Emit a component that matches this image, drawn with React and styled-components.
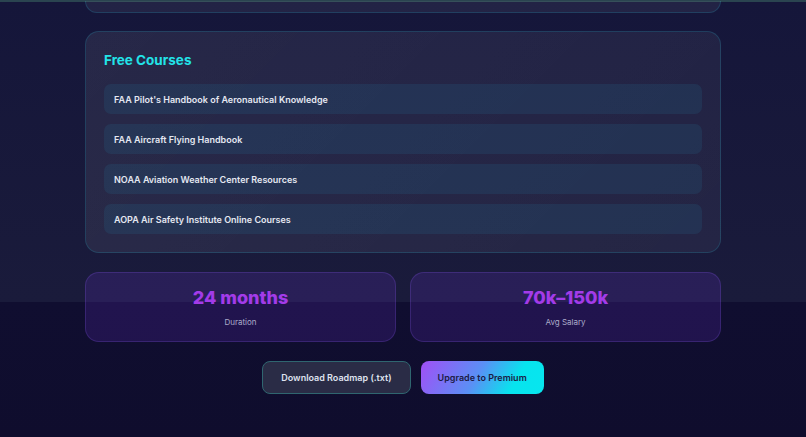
import React from "react";
import styled, { createGlobalStyle } from "styled-components";

const Global = createGlobalStyle`
  html, body { margin: 0; padding: 0; }
  body {
    font-family: Inter, "Noto Sans", sans-serif;
    min-height: 437px;
    background:
      linear-gradient(180deg, #15163a 0px, #1a1b3b 302px, #100e30 302px, #0f0d2d 437px);
    -webkit-font-smoothing: antialiased;
  }
`;

const Page = styled.div`
  display: flex;
  flex-direction: column;
  align-items: center;
  min-height: 437px;
`;

const TopLine = styled.div`
  align-self: stretch;
  height: 2px;
  background: #2a4450;
`;

const Column = styled.div`
  width: 636px;
  display: flex;
  flex-direction: column;
`;

const PrevCard = styled.div`
  height: 11px;
  margin-top: -1px;
  background: rgba(255, 255, 255, 0.06);
  border: 1px solid rgba(34, 211, 238, 0.16);
  border-top: none;
  border-radius: 0 0 14px 14px;
`;

const Card = styled.section`
  margin-top: 18px;
  padding: 18px 18px 18px;
  background: linear-gradient(135deg, rgba(255, 255, 255, 0.075), rgba(255, 255, 255, 0.05));
  border: 1px solid rgba(34, 211, 238, 0.16);
  border-radius: 14px;
`;

const Title = styled.h3`
  margin: 0 0 14px;
  font-size: 13.5px;
  line-height: 20px;
  font-weight: 700;
  color: #22e3e8;
`;

const List = styled.ul`
  list-style: none;
  margin: 0;
  padding: 0;
  display: flex;
  flex-direction: column;
  gap: 10px;
`;

const Item = styled.li`
  height: 30px;
  display: flex;
  align-items: center;
  padding: 0 10px;
  border-radius: 7px;
  background: rgba(34, 160, 200, 0.11);
  color: #e4e7f1;
  font-size: 9px;
  font-weight: 600;
`;

const Stats = styled.div`
  margin-top: 19px;
  display: grid;
  grid-template-columns: 1fr 1fr;
  gap: 14px;
`;

const Stat = styled.div`
  height: 70px;
  box-sizing: border-box;
  display: flex;
  flex-direction: column;
  align-items: center;
  justify-content: center;
  border-radius: 14px;
  background: rgba(124, 58, 237, 0.16);
  border: 1px solid rgba(139, 92, 246, 0.22);
`;

const Value = styled.div`
  font-size: 18px;
  line-height: 22px;
  font-weight: 800;
  color: #a33be9;
`;

const Label = styled.div`
  margin-top: 8px;
  font-size: 8px;
  line-height: 10px;
  color: #acacca;
`;

const Actions = styled.div`
  margin-top: 19px;
  display: flex;
  justify-content: center;
  gap: 10px;
`;

const Button = styled.button`
  height: 33px;
  padding: 0 ${(p) => (p.$primary ? "17px" : "18px")};
  border-radius: 8px;
  font-family: inherit;
  font-size: 9px;
  font-weight: 600;
  cursor: pointer;
  color: ${(p) => (p.$primary ? "#1b1a45" : "#dfe2ee")};
  background: ${(p) =>
    p.$primary
      ? "linear-gradient(120deg, #a14ff6 0%, #5b8ff5 45%, #07e4ee 75%, #07e6ef 100%)"
      : "#2a2c46"};
  border: ${(p) => (p.$primary ? "none" : "1px solid #2f6670")};
`;

const courses = [
  "FAA Pilot's Handbook of Aeronautical Knowledge",
  "FAA Aircraft Flying Handbook",
  "NOAA Aviation Weather Center Resources",
  "AOPA Air Safety Institute Online Courses",
];

export default function App() {
  return (
    <>
      <Global />
      <Page>
        <TopLine />
        <Column>
          <PrevCard />
          <Card>
            <Title>Free Courses</Title>
            <List>
              {courses.map((c) => (
                <Item key={c}>{c}</Item>
              ))}
            </List>
          </Card>
          <Stats>
            <Stat>
              <Value>24 months</Value>
              <Label>Duration</Label>
            </Stat>
            <Stat>
              <Value>70k–150k</Value>
              <Label>Avg Salary</Label>
            </Stat>
          </Stats>
          <Actions>
            <Button>Download Roadmap (.txt)</Button>
            <Button $primary>Upgrade to Premium</Button>
          </Actions>
        </Column>
      </Page>
    </>
  );
}
